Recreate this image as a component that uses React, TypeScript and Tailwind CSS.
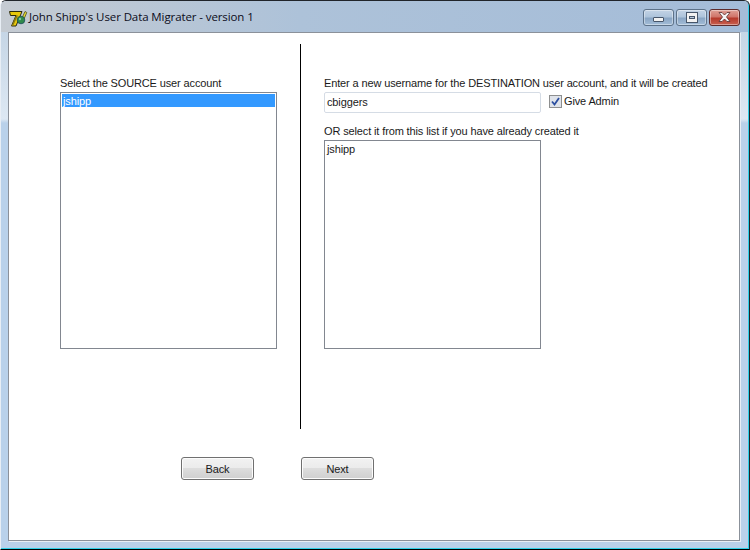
const uiFont = "font-['Liberation_Sans',Arial,sans-serif] text-[11px] leading-[14px] tracking-[-0.13px] text-[#1a1a1a]"

function AppIcon() {
  return (
    <svg width="20" height="20" viewBox="0 0 20 20" className="shrink-0">
      <path d="M1.5 4.5h12.5l-6 14.5H3.5l4.5-10.5H2.5z" fill="#e8c80c" stroke="#2a2a10" strokeWidth="1" />
      <path d="M8 8.5L3.5 19h1.5l5-10.5z" fill="#8a7a10" />
      <path d="M14 11l3-6.5 1.8 1-2.8 6.5z" fill="#e8dc30" stroke="#3a3a10" strokeWidth="0.7" />
      <circle cx="13" cy="13" r="3.8" fill="#2f8a4a" stroke="#1d4a5a" strokeWidth="0.8" />
      <circle cx="12" cy="12" r="1.2" fill="#7fc7a0" />
    </svg>
  )
}

function CaptionButton({ kind }: { kind: 'min' | 'max' | 'close' }) {
  const close = kind === 'close'
  return (
    <div
      className={[
        'flex h-[17px] w-[31px] items-center justify-center rounded-[3px] border shadow-[inset_0_0_0_1px_rgba(255,255,255,0.4)]',
        close
          ? 'border-[#5e2b2b] bg-[linear-gradient(#dfa096_0%,#d0756a_45%,#b63a2c_55%,#c8604f_100%)]'
          : 'border-[#5d7289] bg-[linear-gradient(#c3d3e5_0%,#aec4db_45%,#8aa6c4_55%,#a3bdd8_100%)]',
      ].join(' ')}
    >
      {kind === 'min' && <div className="mt-[5px] h-[5px] w-[11px] rounded-[1px] border border-[#47566a] bg-[#f2f2f2]" />}
      {kind === 'max' && (
        <div className="flex h-[11px] w-[12px] items-center justify-center border border-[#47566a] bg-[#f2f2f2]">
          <div className="h-[3px] w-[6px] border border-[#47566a] bg-[#b8c8da]" />
        </div>
      )}
      {close && (
        <svg width="15" height="12" viewBox="0 0 15 12">
          <path d="M2 1.5h3l2.5 2.5L10 1.5h3L9.5 6l3.5 4.5h-3L7.5 8 5 10.5H2L5.5 6z" fill="#f4f4f4" stroke="#5a3030" strokeWidth="0.8" />
        </svg>
      )}
    </div>
  )
}

function ListBox({ height, children }: { height: string; children: React.ReactNode }) {
  return <div className={`${height} w-[217px] border border-[#828790] bg-white p-[1px]`}>{children}</div>
}

function WizardButton({ label }: { label: string }) {
  return (
    <button
      type="button"
      className={`h-[23px] w-[73px] rounded-[3px] border border-[#707070] bg-[linear-gradient(#f2f2f2_0%,#ebebeb_50%,#dddddd_50%,#cfcfcf_100%)] shadow-[inset_0_0_0_1px_#fcfcfc] ${uiFont}`}
    >
      {label}
    </button>
  )
}

export default function App() {
  return (
    <div className="flex h-[550px] w-[750px] flex-col overflow-hidden rounded-t-[6px] border-x border-y border-x-[#20242a] border-t-[#20242a] border-b-black border-l-[#e8eef5] bg-[linear-gradient(#b4c6da_0px,#c6d6e6_32px,#dde8f3_118px,#b9d1ea_122px,#b9d1ea_100%)] shadow-[inset_-1px_-1px_0_#2fd0e8]">
      <div className="mr-[1px] flex h-[31px] shrink-0 items-center bg-[linear-gradient(90deg,#c5cbd2_0%,#adc2d9_40%,#a4bcd8_100%)] pl-[7px] pr-[8px] pt-[1px]">
        <AppIcon />
        <span className="ml-[1px] font-['Open_Sans',sans-serif] text-[11.5px] tracking-[-0.1px] text-[#0c0c20]">John Shipp's User Data Migrater - version 1</span>
        <div className="ml-auto flex gap-[2px]">
          <CaptionButton kind="min" />
          <CaptionButton kind="max" />
          <CaptionButton kind="close" />
        </div>
      </div>

      <div className="ml-[7px] h-[509px] w-[732px] shrink-0 border border-[#8b919a] bg-white shadow-[1px_1px_0_#e8eef5]">
        <div className="flex pt-[11px]">
          <div className="w-[291px] shrink-0 pl-[51px] pt-[32px]">
            <p className={`${uiFont} mb-[2px]`}>Select the SOURCE user account</p>
            <ListBox height="h-[257px]">
              <div className={`${uiFont} h-[13px] bg-[#3399ff] pl-[1px] leading-[13px] !text-white`}>jshipp</div>
            </ListBox>
          </div>
          <div className="h-[385px] w-px shrink-0 bg-black" />
          <div className="pl-[23px] pt-[32px]">
            <p className={`${uiFont} mb-[2px] whitespace-nowrap`}>Enter a new username for the DESTINATION user account, and it will be created</p>
            <div className="flex items-start gap-[8px]">
              <div className={`${uiFont} flex h-[21px] w-[217px] items-center rounded-[2px] border border-[#d5dce5] pb-[2px] pl-[2px]`}>cbiggers</div>
              <label className={`${uiFont} mt-[2px] flex items-center gap-[2px]`}>
                <span className="flex h-[13px] w-[13px] items-center justify-center border border-[#8e8f8f] bg-[#dfe3ea]">
                  <svg width="9" height="9" viewBox="0 0 9 9">
                    <path d="M1 4.5l2.5 3L8 1" fill="none" stroke="#2c4fa0" strokeWidth="1.8" />
                  </svg>
                </span>
                Give Admin
              </label>
            </div>
            <p className={`${uiFont} mb-[2px] mt-[11px]`}>OR select it from this list if you have already created it</p>
            <ListBox height="h-[209px]">
              <div className={`${uiFont} pl-[1px]`}>jshipp</div>
            </ListBox>
          </div>
        </div>
        <div className="flex gap-[47px] pl-[172px] pt-[28px]">
          <WizardButton label="Back" />
          <WizardButton label="Next" />
        </div>
      </div>
    </div>
  )
}
